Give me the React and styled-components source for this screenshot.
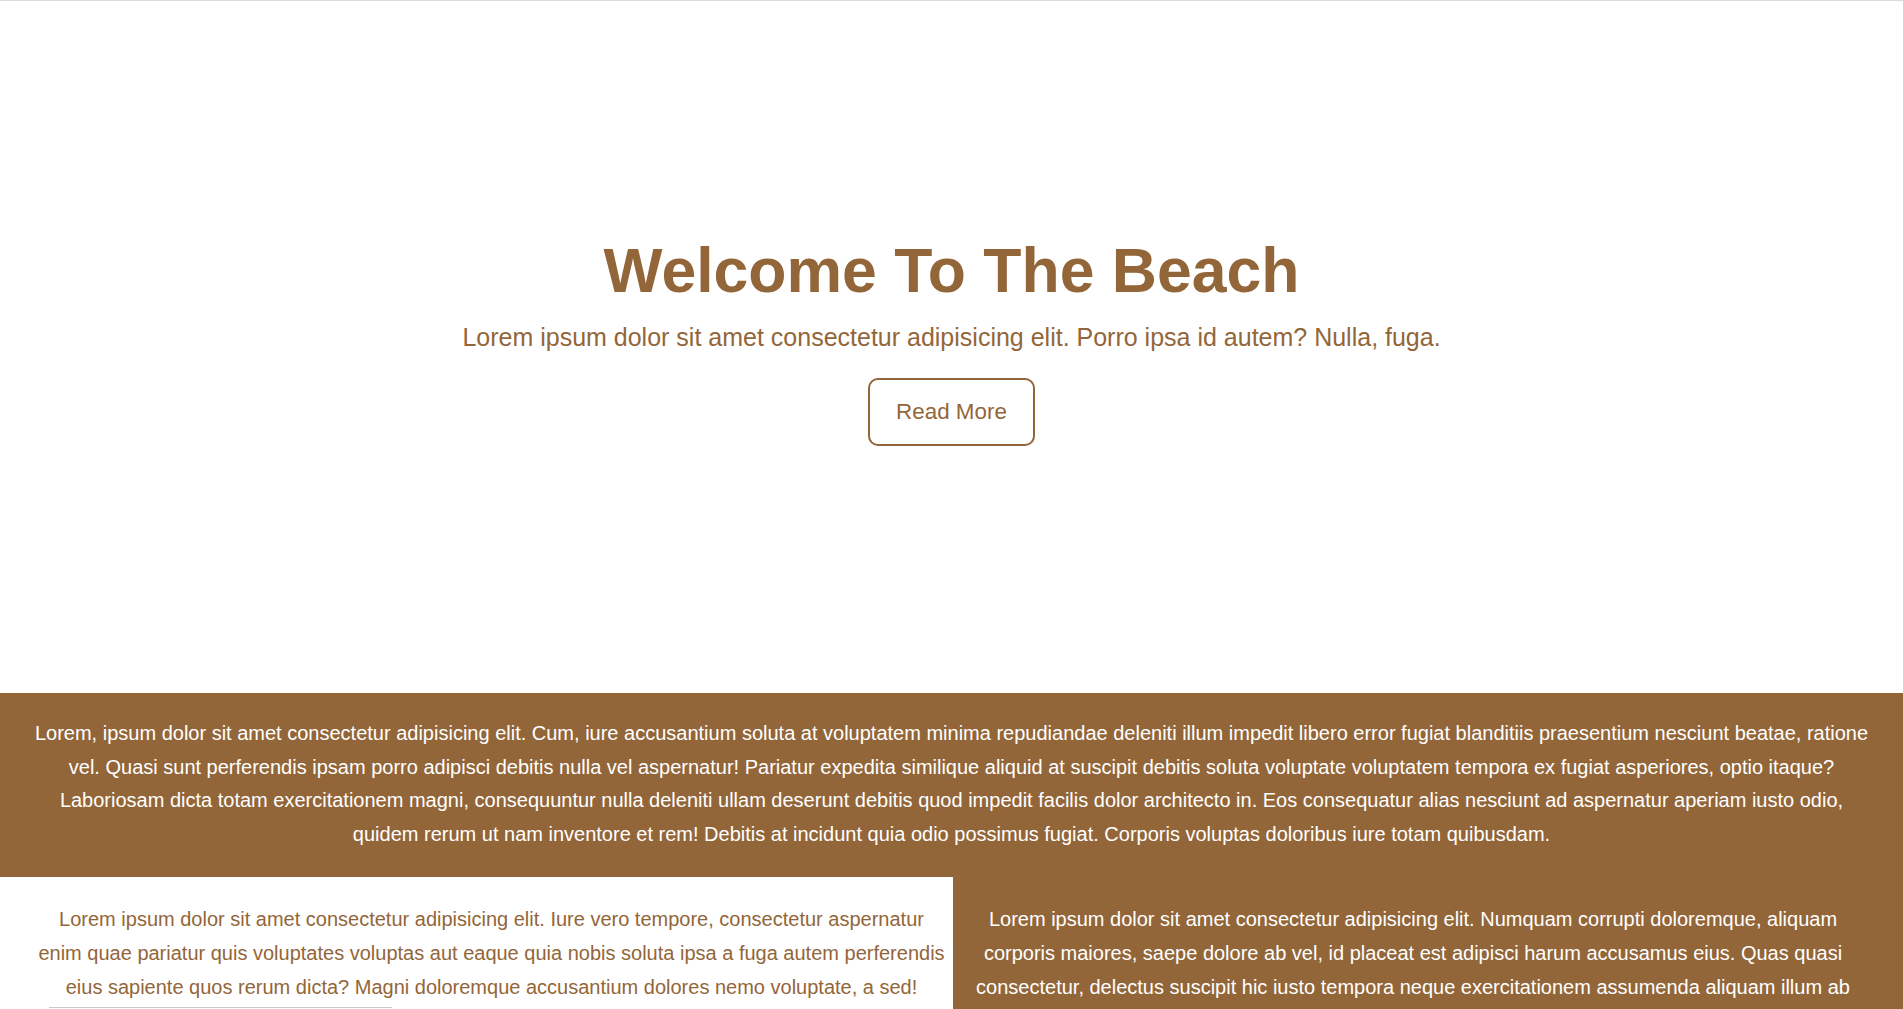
import React from 'react';
import styled, { createGlobalStyle } from 'styled-components';

const brown = '#936639';

const GlobalStyle = createGlobalStyle`
  * {
    box-sizing: border-box;
  }
  body {
    margin: 0;
    font-family: "Liberation Sans", Arial, sans-serif;
    background: #fff;
  }
`;

const Hero = styled.section`
  height: 693px;
  border-top: 1px solid #dcdcdc;
  padding-top: 233px;
  display: flex;
  flex-direction: column;
  align-items: center;
  text-align: center;
  color: ${brown};
`;

const Title = styled.h1`
  margin: 0;
  font-size: 62.5px;
  font-weight: 700;
`;

const Subtitle = styled.p`
  margin: 17px 0 0;
  font-size: 25px;
`;

const ReadMore = styled.button`
  margin-top: 26px;
  padding: 19px 26px;
  border: 2px solid ${brown};
  border-radius: 10px;
  background: transparent;
  color: ${brown};
  font-family: inherit;
  font-size: 22.4px;
  line-height: normal;
  cursor: pointer;
`;

const Band = styled.section`
  background: ${brown};
  color: #fff;
  padding: 24px 29px 26px;
  text-align: center;
`;

const Text = styled.p`
  margin: 0;
  font-size: 20px;
  line-height: 1.68;
`;

const Split = styled.section`
  display: grid;
  grid-template-columns: 953px 1fr;
`;

const Column = styled.div`
  background: ${(p) => (p.$dark ? brown : '#fff')};
  color: ${(p) => (p.$dark ? '#fff' : brown)};
  padding: ${(p) => (p.$dark ? '26px 37px 25px 7px' : '26px 7px 0 37px')};
  text-align: center;
`;

const Divider = styled.div`
  width: 343px;
  margin: 3px 0 0 12px;
  border-top: 1px solid #c8c8c8;
`;

export default function App() {
  return (
    <>
      <GlobalStyle />
      <Hero>
        <Title>Welcome To The Beach</Title>
        <Subtitle>
          Lorem ipsum dolor sit amet consectetur adipisicing elit. Porro ipsa id autem? Nulla, fuga.
        </Subtitle>
        <ReadMore>Read More</ReadMore>
      </Hero>
      <Band>
        <Text>
          Lorem, ipsum dolor sit amet consectetur adipisicing elit. Cum, iure accusantium soluta at
          voluptatem minima repudiandae deleniti illum impedit libero error fugiat blanditiis
          praesentium nesciunt beatae, ratione vel. Quasi sunt perferendis ipsam porro adipisci
          debitis nulla vel aspernatur! Pariatur expedita similique aliquid at suscipit debitis
          soluta voluptate voluptatem tempora ex fugiat asperiores, optio itaque? Laboriosam dicta
          totam exercitationem magni, consequuntur nulla deleniti ullam deserunt debitis quod
          impedit facilis dolor architecto in. Eos consequatur alias nesciunt ad aspernatur aperiam
          iusto odio, quidem rerum ut nam inventore et rem! Debitis at incidunt quia odio possimus
          fugiat. Corporis voluptas doloribus iure totam quibusdam.
        </Text>
      </Band>
      <Split>
        <Column>
          <Text>
            Lorem ipsum dolor sit amet consectetur adipisicing elit. Iure vero tempore, consectetur
            aspernatur enim quae pariatur quis voluptates voluptas aut eaque quia nobis soluta ipsa
            a fuga autem perferendis eius sapiente quos rerum dicta? Magni doloremque accusantium
            dolores nemo voluptate, a sed!
          </Text>
          <Divider />
        </Column>
        <Column $dark>
          <Text>
            Lorem ipsum dolor sit amet consectetur adipisicing elit. Numquam corrupti doloremque,
            aliquam corporis maiores, saepe dolore ab vel, id placeat est adipisci harum accusamus
            eius. Quas quasi consectetur, delectus suscipit hic iusto tempora neque exercitationem
            assumenda aliquam illum ab nemo, voluptatum quis. Ipsam, officiis nostrum!
          </Text>
        </Column>
      </Split>
    </>
  );
}
